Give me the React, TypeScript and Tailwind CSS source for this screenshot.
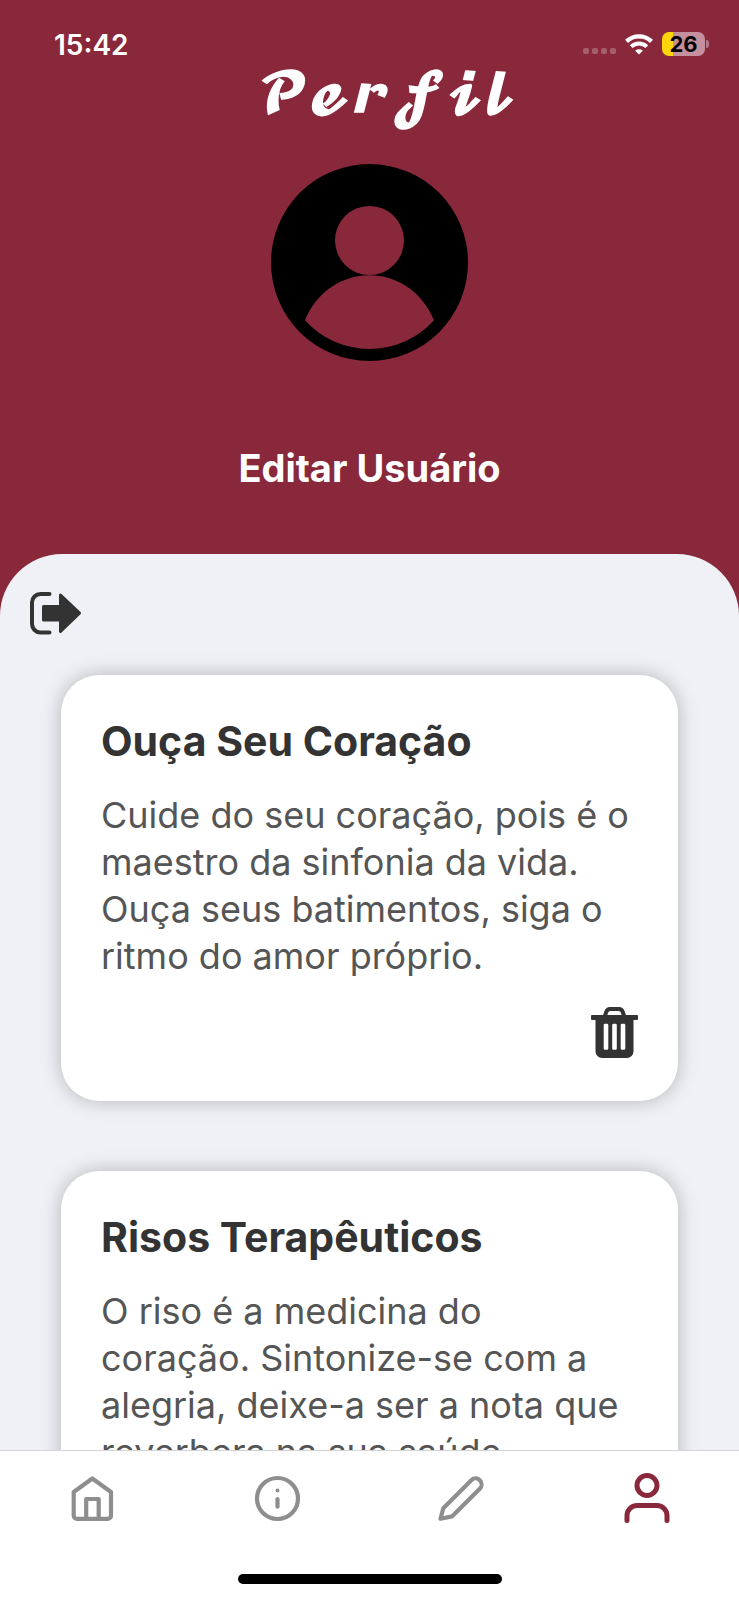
import React from "react";
import { FiUser } from "react-icons/fi";

type Message = { title: string; body: string };

const messages: Message[] = [
  {
    title: "Ouça Seu Coração",
    body: "Cuide do seu coração, pois é o maestro da sinfonia da vida. Ouça seus batimentos, siga o ritmo do amor próprio.",
  },
  {
    title: "Risos Terapêuticos",
    body: "O riso é a medicina do coração. Sintonize-se com a alegria, deixe-a ser a nota que reverbera na sua saúde.",
  },
];

function WifiIcon() {
  return (
    <svg width="28" height="21" viewBox="0 0 28 21" fill="none" stroke="#fff" aria-hidden="true">
      <path d="M1.5 7.300a18.200 18.200 0 0 1 25 0" strokeWidth="4.400" />
      <path d="M6.200 12.600a11.300 11.300 0 0 1 15.600 0" strokeWidth="4" />
      <path d="M14 20.500l-3.800-3.800a5.600 5.600 0 0 1 7.600 0z" fill="#fff" stroke="none" />
    </svg>
  );
}

function StatusBar() {
  return (
    <div className="flex h-[64px] items-end justify-between pr-[30px] pl-[54px]">
      <time className="text-[28px] leading-[38px] font-semibold">15:42</time>
      <div className="flex h-[40px] items-center gap-[9px]">
        <div className="flex gap-[3px] pt-[14px]" aria-hidden="true">
          <span className="size-[6px] rounded-[2px] bg-white/25" />
          <span className="size-[6px] rounded-[2px] bg-white/25" />
          <span className="size-[6px] rounded-[2px] bg-white/25" />
          <span className="size-[6px] rounded-[2px] bg-white/25" />
        </div>
        <WifiIcon />
        <div className="flex items-center gap-px">
          <div className="flex h-[24px] w-[43px] items-center justify-center rounded-[7px] bg-[linear-gradient(90deg,#ffd60a_26%,#c58f9d_26%)] text-[22px] leading-[24px] font-bold text-black">
            26
          </div>
          <span className="h-[8px] w-[3px] rounded-r-full bg-[#b57a89]" />
        </div>
      </div>
    </div>
  );
}

function Avatar() {
  return (
    <svg width="197" height="197" viewBox="0 0 197 197" aria-hidden="true">
      <path
        fillRule="evenodd"
        d="M98.5 0a98.5 98.5 0 1 1 0 197a98.5 98.5 0 1 1 0-197z M98.5 42a34.5 34.5 0 1 0 0 69a34.5 34.5 0 1 0 0-69z M34 156.300A87 87 0 0 0 163 156.300C152 129 127 111.300 98.500 111.300C70 111.300 45 129 34 156.300z"
      />
    </svg>
  );
}

function SignOutIcon() {
  return (
    <svg width="52" height="43" viewBox="0 0 52 43" fill="none" stroke="#333" aria-hidden="true">
      <path d="M19.500 2H10.500a8.500 8.500 0 0 0-8.500 8.500v21.500a8.500 8.500 0 0 0 8.500 8.500H19.500" strokeWidth="4" strokeLinecap="round" />
      <path d="M13.500 14.500h17v-11.500l19 18.200l-19 18.300v-11.500h-17z" fill="#333" strokeWidth="3" strokeLinejoin="round" />
    </svg>
  );
}

function TrashIcon() {
  return (
    <svg width="47" height="51" viewBox="0 0 47 51" fill="#333" aria-hidden="true">
      <path d="M13.500 10l1.800-5a4 4 0 0 1 3.800-3h8.800a4 4 0 0 1 3.800 3l1.800 5" fill="none" stroke="#333" strokeWidth="4" />
      <rect y="8" width="47" height="5" rx="1" />
      <path
        fillRule="evenodd"
        d="M4.500 10h38v34.500a6.500 6.500 0 0 1-6.500 6.500h-25a6.500 6.500 0 0 1-6.500-6.500z M14 16.700a1.300 1.300 0 0 0-1.300 1.300v23.500a1.300 1.300 0 0 0 1.300 1.300h2a1.300 1.300 0 0 0 1.300-1.300v-23.500a1.300 1.300 0 0 0-1.300-1.300z M22.500 16.700a1.300 1.300 0 0 0-1.300 1.300v23.500a1.300 1.300 0 0 0 1.300 1.300h2a1.300 1.300 0 0 0 1.300-1.300v-23.500a1.300 1.300 0 0 0-1.300-1.300z M31 16.700a1.300 1.300 0 0 0-1.300 1.300v23.500a1.300 1.300 0 0 0 1.300 1.300h2a1.300 1.300 0 0 0 1.300-1.300v-23.500a1.300 1.300 0 0 0-1.300-1.300z"
      />
    </svg>
  );
}

function TabIcon({ children }: { children: React.ReactNode }) {
  return (
    <svg
      width="49"
      height="49"
      viewBox="0 0 49 49"
      fill="none"
      stroke="currentColor"
      strokeWidth="4.200"
      strokeLinecap="round"
      strokeLinejoin="round"
      aria-hidden="true"
    >
      {children}
    </svg>
  );
}

function MessageCard({ title, body }: Message) {
  return (
    <article className="rounded-[38px] bg-white px-10 pt-10 pb-[43px] shadow-[0_0_20px_rgba(0,0,0,0.25)]">
      <h2 className="text-[41px] leading-[52px] font-bold text-[#333]">{title}</h2>
      <p className="mt-[25px] text-[36px] leading-[47px] text-[#555]">{body}</p>
      <div className="mt-[27px] flex justify-end">
        <button type="button" aria-label="Excluir">
          <TrashIcon />
        </button>
      </div>
    </article>
  );
}

function TabBar() {
  return (
    <nav className="flex shrink-0 flex-col items-center border-t border-[#d4d4d8] bg-white pb-4">
      <div className="grid h-[94px] w-full grid-cols-4 place-items-center text-[#8e8e8f]">
        <a href="#home" aria-label="Início">
          <TabIcon>
            <path d="M24.300 4.500L43 18v23.500a3.300 3.300 0 0 1-3.300 3.300H9a3.300 3.300 0 0 1-3.300-3.300V18z" />
            <path d="M18.200 44.500V25h12.500v19.500" />
          </TabIcon>
        </a>
        <a href="#info" aria-label="Informações">
          <TabIcon>
            <circle cx="24.500" cy="24.500" r="20.500" />
            <path d="M24.500 25.200v7.500" />
            <circle cx="24.500" cy="16.500" r="2" fill="currentColor" stroke="none" />
          </TabIcon>
        </a>
        <a href="#editar" aria-label="Escrever">
          <TabIcon>
            <path d="M34.300 6.200a6 6 0 0 1 8.500 8.500L15 42.400L3.500 44.800L6.300 34.200z" />
          </TabIcon>
        </a>
        <a href="#perfil" aria-label="Perfil" aria-current="page" className="text-[#8a283b]">
          <FiUser size={60} />
        </a>
      </div>
      <div className="mt-[29px] h-[10px] w-[264px] rounded-full bg-black" />
    </nav>
  );
}

export default function App() {
  return (
    <div className="flex h-screen flex-col overflow-hidden bg-[#8a283b] font-['Inter',sans-serif]">
      <header className="flex flex-col text-white">
        <StatusBar />
        <h1 className="h-[70px] pl-9 text-center font-['DejaVu_Math_TeX_Gyre','Liberation_Serif',serif] text-[52px] leading-[66px] font-bold">
          𝓟𝓮𝓻𝓯𝓲𝓵
        </h1>
        <div className="mt-[30px] flex flex-col items-center">
          <Avatar />
          <button type="button" className="mt-[81px] text-[38px] leading-[52px] font-bold">
            Editar Usuário
          </button>
        </div>
      </header>
      <main className="mt-[60px] min-h-0 flex-1 overflow-hidden rounded-t-[62px] bg-[#eff1f6]">
        <button type="button" aria-label="Sair" className="mt-[38px] ml-[30px] block">
          <SignOutIcon />
        </button>
        <div className="mt-10 flex flex-col gap-[70px] px-[61px]">
          {messages.map((message) => (
            <MessageCard key={message.title} {...message} />
          ))}
        </div>
      </main>
      <TabBar />
    </div>
  );
}
